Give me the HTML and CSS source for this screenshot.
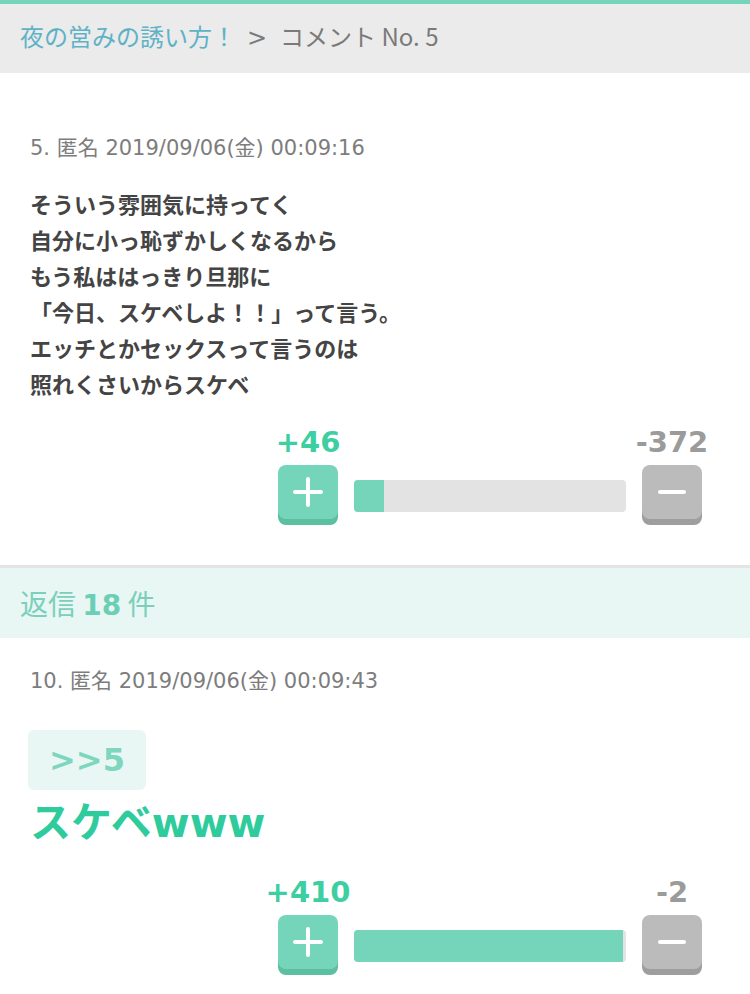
FILE: index.html
```html
<!DOCTYPE html>
<html lang="ja">

<head>
    <meta charset="UTF-8">
    <meta name="viewport" content="width=device-width, initial-scale=1.0">
    <title>コメント No. 5</title>
    <link rel="stylesheet" href="styles.css">
</head>

<body>
    <!-- Breadcrumb -->
    <div class="topbar">
        <a href="#">夜の営みの誘い方！</a><span class="sep">&gt;</span><span>コメント No.&nbsp;5</span>
    </div>

    <!-- Main comment -->
    <div class="comment">
        <p class="meta">5. 匿名 2019/09/06(金) 00:09:16</p>
        <p class="body">そういう雰囲気に持ってく<br>自分に小っ恥ずかしくなるから<br>もう私ははっきり旦那に<br>「今日、スケベしよ！！」って言う。<br>エッチとかセックスって言うのは<br>照れくさいからスケベ</p>
        <div class="vote">
            <div class="vote-col">
                <span class="count plus-count">+46</span>
                <button class="btn btn-plus"><span class="ico-plus"></span></button>
            </div>
            <div class="bar"><div class="bar-fill" style="width: 11%"></div></div>
            <div class="vote-col">
                <span class="count minus-count">-372</span>
                <button class="btn btn-minus"><span class="ico-minus"></span></button>
            </div>
        </div>
    </div>

    <!-- Replies -->
    <div class="replies-head">返信 <b>18</b> 件</div>

    <div class="comment reply">
        <p class="meta">10. 匿名 2019/09/06(金) 00:09:43</p>
        <div class="anchor">&gt;&gt;5</div>
        <p class="big">スケベwww</p>
        <div class="vote">
            <div class="vote-col">
                <span class="count plus-count">+410</span>
                <button class="btn btn-plus"><span class="ico-plus"></span></button>
            </div>
            <div class="bar"><div class="bar-fill" style="width: 99%"></div></div>
            <div class="vote-col">
                <span class="count minus-count">-2</span>
                <button class="btn btn-minus"><span class="ico-minus"></span></button>
            </div>
        </div>
    </div>
</body>

</html>
```

FILE: styles.css
```css
/* Reset */
* {
    margin: 0;
    padding: 0;
    box-sizing: border-box;
}

body {
    font-family: "DejaVu Sans", "Noto Sans CJK JP", sans-serif;
    background: #fff;
    color: #444;
}

/* Breadcrumb bar */
.topbar {
    border-top: 4px solid #74d5bb;
    background: #ebebeb;
    height: 73px;
    padding-left: 20px;
    font-family: "Noto Sans CJK JP", sans-serif;
    font-size: 24px;
    line-height: 64px;
    color: #7a7a7a;
}

.topbar a {
    color: #5fb2c6;
    text-decoration: none;
}

.topbar .sep {
    font-family: "DejaVu Sans", sans-serif;
    margin: 0 13px 0 11px;
}

/* Comments */
.comment {
    padding: 63px 0 40px 30px;
}

.meta {
    font-size: 21px;
    line-height: 24px;
    color: #7d7d7d;
}

.body {
    margin-top: 28px;
    font-size: 22px;
    font-weight: bold;
    line-height: 36px;
    color: #444;
}

/* Voting */
.vote {
    display: flex;
    align-items: flex-end;
    margin-left: 248px;
    margin-top: 22px;
}

.vote-col {
    width: 60px;
    display: flex;
    flex-direction: column;
    align-items: center;
}

.count {
    font-size: 29px;
    font-weight: bold;
    line-height: 32px;
    margin-bottom: 7px;
    white-space: nowrap;
}

.plus-count {
    color: #3dcfa1;
}

.minus-count {
    color: #9b9b9b;
}

.btn {
    width: 60px;
    height: 54px;
    border: none;
    border-radius: 8px;
    margin-bottom: 6px;
    display: flex;
    align-items: center;
    justify-content: center;
}

.btn-plus {
    background: #74d5bb;
    box-shadow: 0 6px 0 #5cbf9f;
}

.btn-minus {
    background: #bbbbbb;
    box-shadow: 0 6px 0 #9e9e9e;
}

.ico-plus {
    width: 30px;
    height: 30px;
    position: relative;
}

.ico-plus::before,
.ico-plus::after {
    content: "";
    position: absolute;
    background: #fff;
    border-radius: 2px;
}

.ico-plus::before {
    left: 0;
    top: 13px;
    width: 30px;
    height: 4px;
}

.ico-plus::after {
    left: 13px;
    top: 0;
    width: 4px;
    height: 30px;
}

.ico-minus {
    width: 28px;
    height: 4px;
    border-radius: 2px;
    background: #fff;
}

.bar {
    width: 272px;
    height: 32px;
    margin: 0 16px 13px;
    background: #e3e3e3;
    border-radius: 4px;
    overflow: hidden;
}

.bar-fill {
    height: 100%;
    background: #74d5bb;
}

/* Replies header */
.replies-head {
    border-top: 3px solid #e4e4e4;
    background: #e8f7f3;
    height: 73px;
    padding-left: 20px;
    font-family: "Noto Sans CJK JP", sans-serif;
    font-size: 28px;
    line-height: 70px;
    color: #7ccfbb;
}

.replies-head b {
    font-family: "DejaVu Sans", sans-serif;
    color: #6ccfb5;
}

.reply {
    padding-top: 31px;
}

.anchor {
    margin: 37px 0 0 -2px;
    width: 118px;
    height: 60px;
    background: #e8f7f3;
    border-radius: 6px;
    text-align: center;
    font-size: 32px;
    font-weight: bold;
    line-height: 60px;
    color: #7dd6bd;
}

.big {
    font-size: 41px;
    font-weight: bold;
    line-height: 50px;
    color: #2ecb9c;
    margin-top: 8px;
}

.reply .vote {
    margin-top: 28px;
}
```
